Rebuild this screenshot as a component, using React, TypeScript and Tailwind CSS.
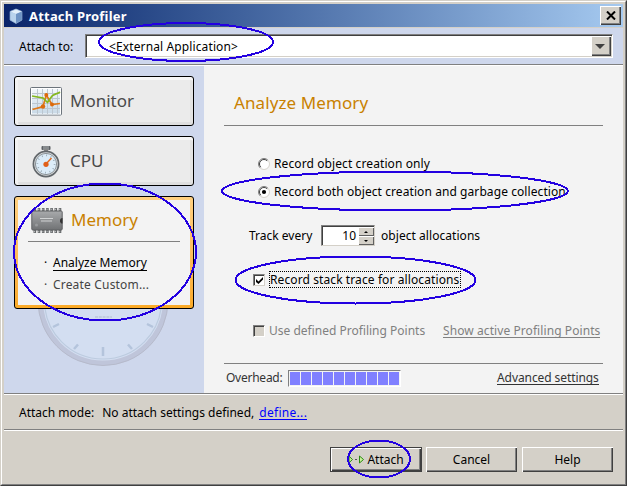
import React from "react";

function CubeIcon() {
  return (
    <svg width="16" height="16" viewBox="0 0 16 16">
      <path d="M8 1 14 3.5V12L8 15.5 2 12V3.5Z" fill="#a9c4e4" />
      <path d="M8 1 14 3.5 8 6 2 3.5Z" fill="#e4f0fa" />
      <path d="M8 6 14 3.5V12L8 15.5Z" fill="#6f94c4" />
      <path d="M2 3.5 8 6V15.5L2 12Z" fill="#b9d3ec" />
      <path d="M8 1 14 3.5V12L8 15.5 2 12V3.5Z" fill="none" stroke="#8aa8cf" strokeWidth=".7" />
    </svg>
  );
}

function MonitorIcon() {
  return (
    <svg width="32" height="29" viewBox="0 0 32 29">
      <defs>
        <linearGradient id="mon" x1="0" y1="0" x2="0" y2="1">
          <stop offset="0" stopColor="#f6f9fc" />
          <stop offset="1" stopColor="#c6d8e6" />
        </linearGradient>
      </defs>
      <rect x=".5" y=".5" width="31" height="27.5" rx="1" fill="url(#mon)" stroke="#6c747c" />
      <rect x="1.5" y="1.5" width="29" height="25.5" fill="none" stroke="#fff" />
      <path d="M7.5 2v25M12.5 2v25M17.5 2v25M22.500 2v25M27.500 2v25M2 6.500h28M2 11.500h28M2 16.500h28M2 21.500h28" stroke="#bcc6cf" fill="none" />
      <path d="M2.500 22.500 13 19.500 16.300 8 22 17.500 30 16.500" fill="none" stroke="#e07818" strokeWidth="1.700" />
      <circle cx="13" cy="19.500" r="2.200" fill="#dc6a0c" />
      <circle cx="16.300" cy="8" r="2" fill="#dc6a0c" />
      <circle cx="22" cy="17.500" r="2" fill="#dc6a0c" />
      <path d="M2 9 13 11 17.500 15.500 22 9C24 7 27 7 30 5" fill="none" stroke="#84b81c" strokeWidth="1.700" />
    </svg>
  );
}

function StopwatchIcon() {
  return (
    <svg width="28" height="33" viewBox="0 0 28 33">
      <rect x="9.500" y="1" width="9" height="4" rx="1" fill="#5b5f63" />
      <path d="M12 1v4M14 1v4M16 1v4" stroke="#c8ccce" strokeWidth=".8" />
      <rect x="12" y="4" width="4" height="3" fill="#888" />
      <circle cx="14" cy="19" r="12.600" fill="#d8dcde" stroke="#62676b" strokeWidth="1.700" />
      <circle cx="14" cy="19" r="10.600" fill="#dcecf8" stroke="#8c9398" strokeWidth="1" />
      <circle cx="14" cy="19" r="8.600" fill="none" stroke="#8fa0ab" strokeWidth="1.700" strokeDasharray=".8 3.703" />
      <path d="M14 19 19.500 13" stroke="#e56a1c" strokeWidth="1.500" />
      <circle cx="14" cy="19.300" r="2.600" fill="#e0601a" />
    </svg>
  );
}

function ChipIcon() {
  return (
    <svg width="32" height="27" viewBox="0 0 32 27">
      <defs>
        <linearGradient id="chip" x1="0" y1="0" x2="0" y2="1">
          <stop offset="0" stopColor="#a8aaac" />
          <stop offset="1" stopColor="#707274" />
        </linearGradient>
      </defs>
      <path d="M2.500 2.500h28M2.500 24.500h28" stroke="#66696b" strokeWidth="3" strokeDasharray="2.600 1.600" />
      <path d="M3 2.500h28M3 24.500h28" stroke="#b5b7b9" strokeWidth="1.500" strokeDasharray="1 3.200" />
      <rect x=".8" y="4" width="30.400" height="19" rx="1" fill="url(#chip)" stroke="#606264" />
      <path d="M9 11.500h13M10 14h11" stroke="#d0d2d3" />
      <circle cx="5.500" cy="18" r="1.500" fill="#999b9d" />
      <path d="M31.500 11a2.500 2.800 0 0 0 0 5.600Z" fill="#333" />
    </svg>
  );
}

function AttachIcon() {
  return (
    <svg width="17" height="9" viewBox="0 0 17 9">
      <path d="M1 1.200 4.500 4.500 1 7.800Z" fill="#c8f09a" stroke="#2b8a12" />
      <path d="M7 4.500h2" stroke="#555" />
      <path d="M11.500 1 15.500 4.500 11.500 8Z" fill="#c8f09a" stroke="#2b8a12" />
    </svg>
  );
}

function Watermark() {
  return (
    <svg width="140" height="57" viewBox="0 0 140 57">
      <circle cx="70" cy="-8.500" r="62.500" fill="#d3def1" stroke="#bfc5da" strokeWidth="5" />
      <circle cx="70" cy="-8.500" r="65" fill="none" stroke="#b6bacb" strokeWidth="1" />
      <circle cx="70" cy="-8.500" r="58.500" fill="none" stroke="#bccbdf" strokeWidth="1.200" />
      <path d="M70 38v9M45 35.500 41 40M95 35.500 99 40M26 15 20 18M114 15 120 18" stroke="#b4c4dc" strokeWidth="2.500" />
      <path d="M62 8h17" stroke="#bcc6d9" strokeWidth="1.500" strokeDasharray="3 .8" />
    </svg>
  );
}

function Radio({ checked }: { checked?: boolean }) {
  return (
    <svg width="12" height="12" viewBox="0 0 12 12" className="shrink-0">
      <circle cx="6" cy="6" r="5" fill="#fff" />
      <path d="M9.900 2.100A5.500 5.500 0 0 0 2.100 9.900" fill="none" stroke="#808080" />
      <path d="M9.200 2.800A4.500 4.500 0 0 0 2.800 9.200" fill="none" stroke="#404040" />
      <path d="M9.900 2.100A5.500 5.500 0 0 1 2.100 9.900" fill="none" stroke="#d8d5ce" />
      {checked && <circle cx="6" cy="6" r="2.100" fill="#000" />}
    </svg>
  );
}

function NavButton({ icon, label }: { icon: React.ReactNode; label: string }) {
  return (
    <div className="flex h-[50px] items-center rounded-[3px] border border-black bg-[#ebebeb] shadow-[inset_0_3px_0_#f6f6f6,inset_3px_0_0_#f1f1f1,inset_0_-3px_0_#dfdfdf,inset_-3px_0_0_#e3e3e3]">
      <div className="ml-[14px] flex w-[34px] justify-center">{icon}</div>
      <span className="ml-[7px] pb-px text-[17px] text-[#4a4a4a]">{label}</span>
    </div>
  );
}

function PushButton({ children, primary }: { children: React.ReactNode; primary?: boolean }) {
  return (
    <button
      className={
        primary
          ? "flex h-[25px] w-[92px] items-center justify-center border border-[#404040] shadow-[inset_1px_1px_0_#fff,inset_-1px_-1px_0_#404040,inset_-2px_-2px_0_#808080]"
          : "flex h-[25px] w-[91px] items-center justify-center shadow-[inset_1px_1px_0_#fff,inset_-1px_-1px_0_#404040,inset_-2px_-2px_0_#808080]"
      }
    >
      {children}
    </button>
  );
}

export default function App() {
  return (
    <div className="relative h-[486px] w-[627px] overflow-hidden whitespace-nowrap border border-t-[#d4d0c8] border-l-[#d4d0c8] border-r-[#404040] border-b-[#404040] bg-[#d4d0c8] font-['Noto_Sans',sans-serif] text-[12px] leading-4 text-black">
      <div className="flex h-[484px] w-[625px] flex-col border border-t-white border-l-white border-r-[#808080] border-b-[#808080] pt-[2px] pr-[2px] pl-[2px]">
        <header className="flex h-[23px] shrink-0 items-center bg-linear-to-r from-[#0a246a] to-[#a6caf0] pl-[4px] pr-[2px]">
          <CubeIcon />
          <h1 className="ml-[5px] flex-1 text-[13px] font-bold tracking-[0.2px] text-white">Attach Profiler</h1>
          <button className="flex h-[19px] w-[21px] items-center justify-center bg-[#d4d0c8] shadow-[inset_1px_1px_0_#fff,inset_-1px_-1px_0_#404040,inset_-2px_-2px_0_#808080]">
            <svg width="10" height="9" viewBox="0 0 10 9">
              <path d="M1 .5 9 8.500M9 .5 1 8.500" stroke="#000" strokeWidth="2" />
            </svg>
          </button>
        </header>

        <div className="mt-px flex h-[37px] shrink-0 border-b border-[#808080] bg-[#ced7ec] pt-[6px] pl-[15px]">
          <label className="w-[66px] pt-[5px]">Attach to:</label>
          <div className="flex h-[24px] w-[528px] border border-t-[#808080] border-l-[#808080] border-r-white border-b-white bg-white shadow-[inset_1px_1px_0_#404040,inset_-1px_-1px_0_#d4d0c8]">
            <span className="flex-1 pt-[4px] pl-[23px] tracking-[0.12px]">&lt;External Application&gt;</span>
            <div className="mt-px mr-[1px] flex h-[20px] w-[20px] items-center justify-center bg-[#d4d0c8] pr-[3px] shadow-[inset_1px_1px_0_#fff,inset_-1px_-1px_0_#404040,inset_-2px_-2px_0_#808080]">
              <div className="border-x-[5px] border-t-[5px] border-x-transparent border-t-[#404040]" />
            </div>
          </div>
        </div>

        <div className="flex h-[329px] shrink-0 border-t border-b border-t-white border-b-[#808080] bg-[#f3f3f3]">
          <nav className="flex w-[200px] shrink-0 flex-col bg-[#ced7ec] px-[10px] pt-[10px]">
            <div className="flex flex-col gap-[10px]">
              <NavButton icon={<MonitorIcon />} label="Monitor" />
              <NavButton icon={<StopwatchIcon />} label="CPU" />
              <div className="h-[113px] rounded-[3px] border border-black bg-linear-to-b from-[#ffd081] to-[#fbaa26] p-[3px]">
                <div className="h-full bg-[#f3f3f3] px-[10px] pt-[7px]">
                  <div className="flex h-[35px] items-start border-b border-[#808080] pl-[3px]">
                    <ChipIcon />
                    <span className="ml-[8px] pt-[5px] text-[17px] text-[#c98100]">Memory</span>
                  </div>
                  <div className="flex pt-[13px] pl-[16px]">
                    <span className="w-[9px]">·</span>
                    <span className="h-[16px] border-b border-black leading-4">Analyze Memory</span>
                  </div>
                  <div className="flex pt-[6px] pl-[16px] tracking-[0.18px] text-[#444]">
                    <span className="w-[9px]">·</span>
                    <span>Create Custom...</span>
                  </div>
                </div>
              </div>
            </div>
            <div className="pl-[19px]">
              <Watermark />
            </div>
          </nav>

          <main className="flex w-[419px] flex-col pr-[20px] pl-[20px]">
            <h2 className="h-[60px] border-b border-[#808080] pt-[29px] pl-[10px] text-[17px] tracking-[0.1px] text-[#c98100]">Analyze Memory</h2>
            <div className="mt-[30px] flex h-[16px] items-center gap-[4px] pl-[34px]">
              <Radio />
              <span className="tracking-[0.1px]">Record object creation only</span>
            </div>
            <div className="mt-[12px] flex h-[16px] items-center gap-[4px] pl-[34px]">
              <Radio checked />
              <span className="tracking-[0.08px]">Record both object creation and garbage collection</span>
            </div>
            <div className="mt-[25px] flex h-[21px] items-center pl-[25px]">
              <span className="w-[72px] pt-px">Track every</span>
              <div className="flex h-[21px] w-[54px] border border-t-[#808080] border-l-[#808080] border-r-[#d4d0c8] border-b-[#d4d0c8] bg-white shadow-[inset_1px_1px_0_#404040]">
                <span className="flex-1 pt-[2px] pr-[2px] text-right">10</span>
                <div className="flex w-[16px] flex-col pt-px">
                  <div className="flex h-[9px] items-center justify-center bg-[#d4d0c8] shadow-[inset_1px_1px_0_#fff,inset_-1px_-1px_0_#606060]">
                    <div className="border-x-2 border-b-2 border-x-transparent border-b-black" />
                  </div>
                  <div className="flex h-[9px] items-center justify-center bg-[#d4d0c8] shadow-[inset_1px_1px_0_#fff,inset_-1px_-1px_0_#606060]">
                    <div className="border-x-2 border-t-2 border-x-transparent border-t-black" />
                  </div>
                </div>
              </div>
              <span className="ml-[6px] pt-px tracking-[0.05px]">object allocations</span>
            </div>
            <div className="mt-[25px] flex h-[17px] items-center pl-[29px]">
              <div className="h-[12px] w-[12px] border border-t-[#808080] border-l-[#808080] border-r-[#d4d0c8] border-b-[#d4d0c8] bg-white shadow-[inset_1px_1px_0_#404040]">
                <svg width="10" height="10" viewBox="0 0 10 10">
                  <path d="M2 4v3L4.500 9 9 4.500V2L4.500 6.500Z" fill="#000" />
                </svg>
              </div>
              <span className="ml-[4px] h-[17px] w-[192px] border border-dotted border-black tracking-[0.1px]">Record stack trace for allocations</span>
            </div>
            <div className="mt-[34px] flex h-[18px] items-center pl-[29px] text-[#808080]">
              <div className="h-[12px] w-[12px] border border-t-[#808080] border-l-[#808080] border-r-white border-b-white bg-[#d4d0c8] shadow-[inset_1px_1px_0_#404040]" />
              <span className="ml-[4px] w-[174px]">Use defined Profiling Points</span>
              <span className="-mt-px h-[15px] border-b border-[#808080] tracking-[0.08px]">Show active Profiling Points</span>
            </div>
            <div className="mt-[23px] flex border-t border-[#808080] pt-[6px] pl-[2px]">
              <span className="w-[62px] tracking-[-0.25px] text-[#333]">Overhead:</span>
              <div className="flex h-[17px] w-[113px] gap-px border border-t-[#808080] border-l-[#808080] border-r-white border-b-white py-px pl-px">
                {Array.from({ length: 10 }, (_, i) => (
                  <div key={i} className="h-[13px] w-[10px] bg-[#8080ff]" />
                ))}
              </div>
              <span className="ml-[96px] h-[15px] border-b border-[#333] tracking-[-0.08px] text-[#333]">Advanced settings</span>
            </div>
          </main>
        </div>

        <div className="flex h-[36px] shrink-0 border-t border-b border-t-white border-b-[#808080] pt-[10px] pl-[15px]">
          <span>Attach mode:</span>
          <span className="ml-[8px]">No attach settings defined,</span>
          <span className="ml-[5px] h-[15px] border-b border-[#0000ff] tracking-[0.3px] text-[#0000ff]">define...</span>
        </div>

        <footer className="flex justify-end border-t border-white pt-[16px] pr-[10px]">
          <PushButton primary>
            <AttachIcon />
            <span className="ml-[2px]">Attach</span>
          </PushButton>
          <div className="ml-[4px] flex gap-[5px]">
            <PushButton>Cancel</PushButton>
            <PushButton>Help</PushButton>
          </div>
        </footer>
      </div>

      <svg className="pointer-events-none absolute -top-px -left-px" width="627" height="486" fill="none" stroke="#2300e1" strokeWidth="2" shapeRendering="crispEdges">
        <ellipse cx="186" cy="42" rx="87" ry="19" />
        <ellipse cx="105" cy="252" rx="91" ry="68.500" />
        <ellipse cx="395" cy="191" rx="173" ry="19.500" />
        <ellipse cx="355.500" cy="280" rx="120" ry="23.500" />
        <ellipse cx="379" cy="459" rx="31" ry="18.500" />
      </svg>
    </div>
  );
}
